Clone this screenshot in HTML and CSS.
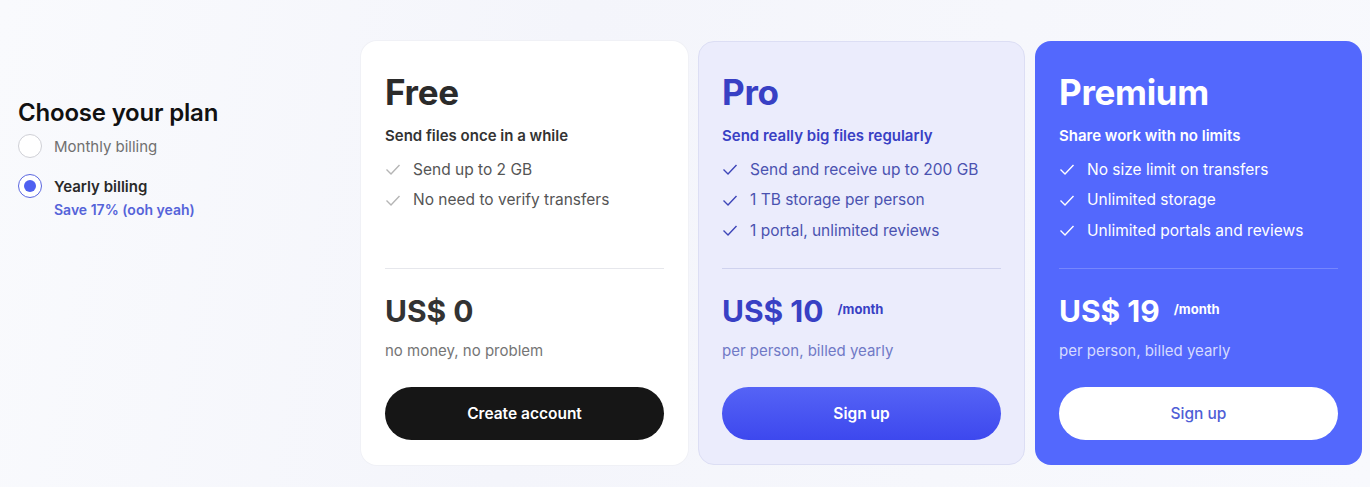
FILE: index.html
```html
<!DOCTYPE html>
<html lang="en">
<head>
<meta charset="utf-8">
<title>Choose your plan</title>
<link rel="stylesheet" href="styles.css">
</head>
<body>
<main class="page">
  <section class="billing">
    <h1 class="billing-title">Choose your plan</h1>
    <label class="option">
      <span class="radio"></span>
      <span class="option-text">Monthly billing</span>
    </label>
    <label class="option option-active">
      <span class="radio radio-on"><span class="dot"></span></span>
      <span class="option-text">Yearly billing</span>
    </label>
    <div class="save">Save 17% (ooh yeah)</div>
  </section>

  <article class="card card-free">
    <h2 class="plan">Free</h2>
    <p class="tagline">Send files once in a while</p>
    <ul class="features">
      <li><svg class="check" viewBox="0 0 16 16"><path d="M1.5 8.5 L6 13 L14.5 4"/></svg>Send up to 2 GB</li>
      <li><svg class="check" viewBox="0 0 16 16"><path d="M1.5 8.5 L6 13 L14.5 4"/></svg>No need to verify transfers</li>
    </ul>
    <hr class="divider">
    <div class="price"><span class="amount">US$ 0</span></div>
    <p class="note">no money, no problem</p>
    <button class="btn btn-dark">Create account</button>
  </article>

  <article class="card card-pro">
    <h2 class="plan">Pro</h2>
    <p class="tagline">Send really big files regularly</p>
    <ul class="features">
      <li><svg class="check" viewBox="0 0 16 16"><path d="M1.5 8.5 L6 13 L14.5 4"/></svg>Send and receive up to 200 GB</li>
      <li><svg class="check" viewBox="0 0 16 16"><path d="M1.5 8.5 L6 13 L14.5 4"/></svg>1 TB storage per person</li>
      <li><svg class="check" viewBox="0 0 16 16"><path d="M1.5 8.5 L6 13 L14.5 4"/></svg>1 portal, unlimited reviews</li>
    </ul>
    <hr class="divider">
    <div class="price"><span class="amount">US$ 10</span><span class="per">/month</span></div>
    <p class="note">per person, billed yearly</p>
    <button class="btn btn-blue">Sign up</button>
  </article>

  <article class="card card-premium">
    <h2 class="plan">Premium</h2>
    <p class="tagline">Share work with no limits</p>
    <ul class="features">
      <li><svg class="check" viewBox="0 0 16 16"><path d="M1.5 8.5 L6 13 L14.5 4"/></svg>No size limit on transfers</li>
      <li><svg class="check" viewBox="0 0 16 16"><path d="M1.5 8.5 L6 13 L14.5 4"/></svg>Unlimited storage</li>
      <li><svg class="check" viewBox="0 0 16 16"><path d="M1.5 8.5 L6 13 L14.5 4"/></svg>Unlimited portals and reviews</li>
    </ul>
    <hr class="divider">
    <div class="price"><span class="amount">US$ 19</span><span class="per">/month</span></div>
    <p class="note">per person, billed yearly</p>
    <button class="btn btn-white">Sign up</button>
  </article>
</main>
</body>
</html>
```

FILE: styles.css
```css
* { box-sizing: border-box; }

html, body {
  margin: 0;
  height: 100%;
}

body {
  font-family: Inter, "Noto Sans", sans-serif;
  background: linear-gradient(100deg, #f9fafd 0%, #f4f5fb 40%, #f8f9fd 100%);
  color: #222;
}

.page {
  display: flex;
  padding: 41px 8px 22px 18px;
  gap: 10px;
  align-items: stretch;
}

.billing {
  width: 333px;
  padding-top: 57px;
}

.billing-title {
  margin: 0 0 5px;
  font-size: 24px;
  font-weight: 600;
  line-height: 30px;
  letter-spacing: -0.2px;
  color: #111;
}

.option {
  display: flex;
  align-items: center;
  gap: 12px;
  height: 26px;
  margin-bottom: 14px;
}

.radio {
  width: 24px;
  height: 24px;
  border-radius: 50%;
  border: 1px solid #cfd0d6;
  background: #fff;
  display: flex;
  align-items: center;
  justify-content: center;
}

.radio-on {
  border-color: #5a66e0;
}

.dot {
  width: 12px;
  height: 12px;
  border-radius: 50%;
  background: #4f60f0;
}

.option-text {
  font-size: 15px;
  color: #707070;
}

.option-active {
  margin-bottom: 0;
}

.option-active .option-text {
  color: #2a2a2a;
  font-weight: 600;
}

.save {
  margin-left: 36px;
  margin-top: 2px;
  font-size: 14px;
  font-weight: 600;
  color: #5563d9;
}

.card {
  width: 327px;
  height: 424px;
  border-radius: 16px;
  padding: 28px 24px 25px;
  display: flex;
  flex-direction: column;
}

.card-free {
  background: #fff;
  box-shadow: 0 0 0 1px #f0f1f6;
}

.card-pro {
  background: #ebecfc;
  border: 1px solid #dcdef4;
  padding: 27px 23px 24px;
}

.card-premium {
  background: #5368fd;
}

.plan {
  margin: 0;
  font-size: 35px;
  font-weight: 700;
  line-height: 46px;
  letter-spacing: -0.3px;
  color: #2b2b2b;
}

.tagline {
  margin: 11px 0 8px;
  font-size: 15px;
  font-weight: 600;
  line-height: 20px;
  color: #333;
}

.features {
  list-style: none;
  margin: 0;
  padding: 0;
  flex: 1;
}

.features li {
  display: flex;
  align-items: center;
  gap: 12px;
  height: 30.5px;
  font-size: 15.5px;
  color: #555;
}

.check {
  width: 16px;
  height: 16px;
  flex: none;
  fill: none;
  stroke: #b5b5b5;
  stroke-width: 1.4;
}

.divider {
  margin: 0;
  border: 0;
  border-top: 1px solid #e6e7ec;
}

.price {
  display: flex;
  align-items: center;
  gap: 14px;
  margin-top: 22px;
  height: 40px;
}

.amount {
  font-size: 30px;
  font-weight: 700;
  letter-spacing: 0;
  color: #333;
}

.per {
  font-size: 13px;
  font-weight: 700;
  margin-top: -4px;
}

.note {
  margin: 10px 0 0;
  font-size: 15px;
  line-height: 20px;
  color: #757575;
}

.btn {
  margin-top: 26px;
  height: 53px;
  border: 0;
  border-radius: 27px;
  font-family: inherit;
  font-size: 15.5px;
  font-weight: 600;
  cursor: pointer;
}

.btn-dark {
  background: #161616;
  color: #fff;
}

.card-pro .plan,
.card-pro .tagline,
.card-pro .amount,
.card-pro .per {
  color: #3840c4;
}

.card-pro .features li {
  color: #4a52b0;
}

.card-pro .check {
  stroke: #3d45b8;
}

.card-pro .divider {
  border-top-color: #cfd2ee;
}

.card-pro .note {
  color: #7079c6;
}

.btn-blue {
  background: linear-gradient(180deg, #5563f6 0%, #3d48ee 100%);
  color: #fff;
}

.card-premium .plan,
.card-premium .tagline,
.card-premium .amount,
.card-premium .per,
.card-premium .features li {
  color: #fff;
}

.card-premium .check {
  stroke: #fff;
}

.card-premium .divider {
  border-top-color: #7686fd;
}

.card-premium .note {
  color: #d6dbff;
}

.btn-white {
  background: #fff;
  color: #4f5ed6;
  font-weight: 500;
}
```
